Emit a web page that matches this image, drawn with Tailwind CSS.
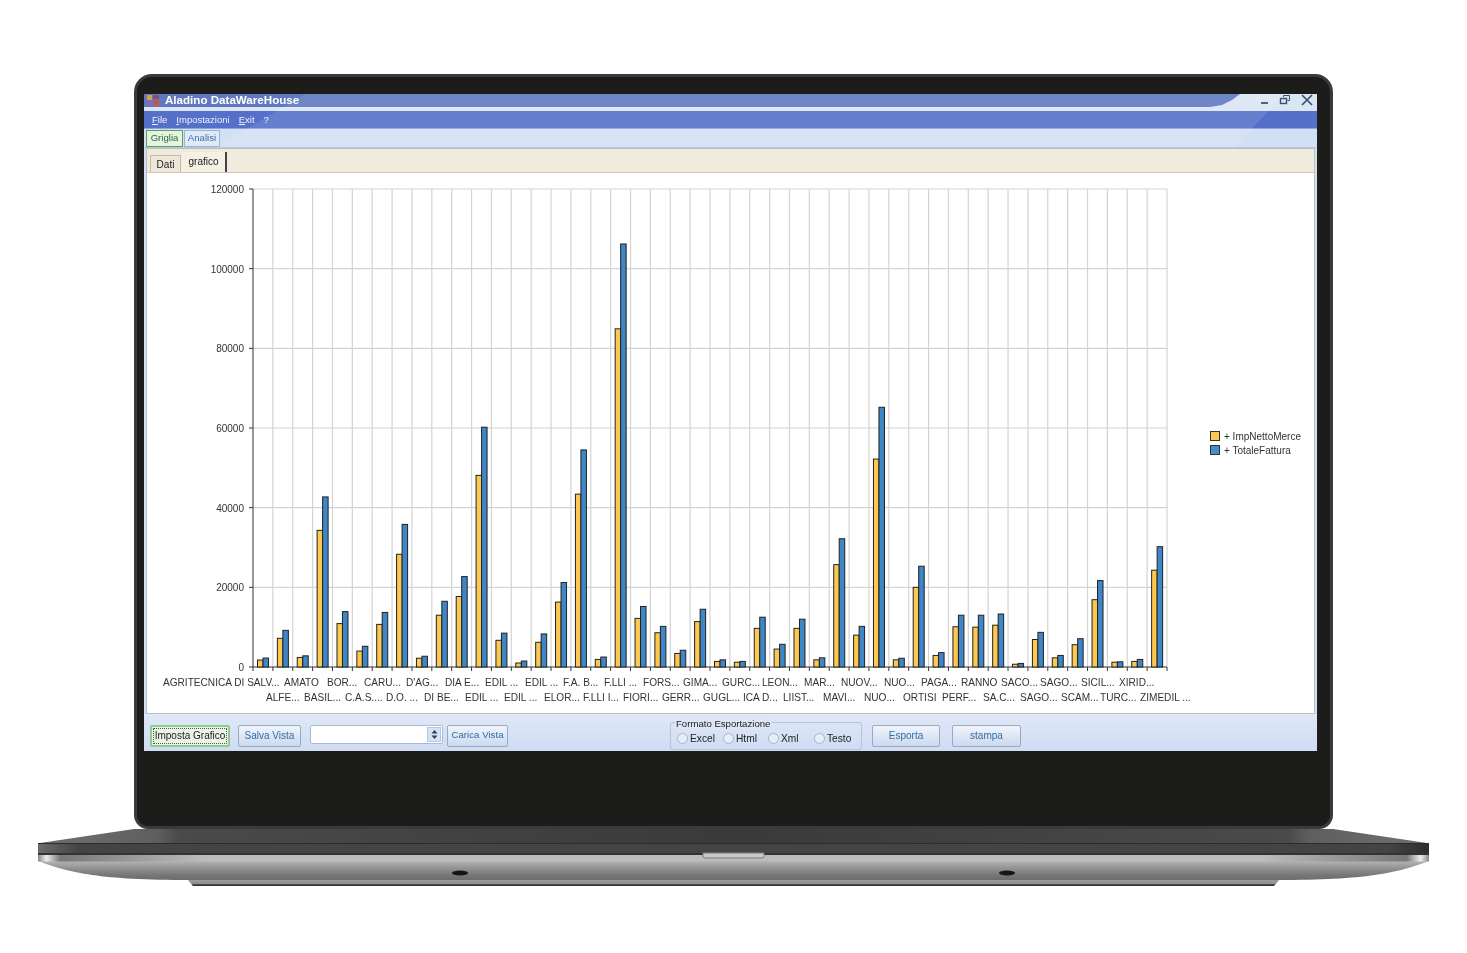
<!doctype html>
<html lang="it">
<head>
<meta charset="utf-8">
<title>Aladino DataWareHouse</title>
<script src="https://cdn.jsdelivr.net/npm/@tailwindcss/browser@4"></script>
</head>
<body class="bg-white font-['Liberation_Sans',Arial,sans-serif] overflow-hidden">
<div class="h-[953px] w-[1467px] pt-[74px]">
  <!-- lid -->
  <div class="ml-[134px] h-[755px] w-[1199px] rounded-t-[18px] rounded-b-[14px] border-[3px] border-[#3a3a3a] bg-[#1c1c1a] pl-[7px] pr-[13px] pt-[17px]">
    <div class="relative flex h-[657px] flex-col overflow-hidden bg-[#d3e0f4] blur-[0.5px]">
      <!-- title bar -->
      <div class="relative flex h-[17px] items-start bg-[#dbe5f4]">
        <div class="absolute left-0 top-0 h-[13px] w-[1096px] bg-[#5f78c0] [clip-path:polygon(0_0,1096px_0,1088px_6px,1078px_11px,1066px_13px,0_13px)]"></div>
        <svg class="relative ml-[2px] h-[13px] w-[15px]" viewBox="0 0 15 13"><rect x="1" y="1" width="5" height="5" fill="#d9a23c"/><rect x="7" y="1" width="6" height="4" fill="#8a4a7a"/><rect x="1" y="7" width="6" height="5" fill="#8c6bb0"/><rect x="8" y="6" width="5" height="6" fill="#c45a3a"/></svg>
        <span class="relative ml-[4px] text-[11.6px] font-bold leading-[11px] text-white">Aladino DataWareHouse</span>
        <div class="relative ml-auto mr-[3px] flex items-start gap-[9px]">
          <svg class="mt-px h-[12px] w-[12px]" viewBox="0 0 12 12"><rect x="3" y="7" width="7" height="2" fill="#3d5270"/></svg>
          <svg class="h-[12px] w-[12px]" viewBox="0 0 12 12" fill="none" stroke="#3d5270"><rect x="1.5" y="4.5" width="6" height="5" stroke-width="1.4"/><path d="M4.5 3V1.5h6v5H8.5"/></svg>
          <svg class="h-[13px] w-[14px]" viewBox="0 0 14 13" fill="none" stroke="#3d5270" stroke-width="1.7"><path d="M2 1l10 10M12 1L2 11"/></svg>
        </div>
      </div>
      <!-- menu -->
      <div class="flex h-[18px] items-center gap-[9px] border-b border-[#8ca3de] bg-[#5470c8] pl-[8px] pt-px text-[9.5px] text-[#eef2fb]">
        <span><u>F</u>ile</span><span><u>I</u>mpostazioni</span><span><u>E</u>xit</span><span>?</span>
      </div>
      <!-- top tabs -->
      <div class="flex h-[19px] items-end gap-px border-b border-[#b8c6d8] bg-[#d3e0f4] pl-[2px] text-[9.6px]">
        <div class="flex h-[17px] w-[37px] items-center justify-center border border-[#5aa05a] bg-[#e6f4df] text-[#2c6a3c]">Griglia</div>
        <div class="flex h-[17px] w-[36px] items-center justify-center border border-[#9db4cf] bg-[#dfe9f7] text-[#3a6ea5]">Analisi</div>
      </div>
      <!-- panel -->
      <div class="mx-[2px] flex h-[566px] flex-col border border-[#b7bfc4] bg-[#f0ebdc]">
        <div class="flex h-[24px] items-end gap-px border-b border-[#cfc8b2] pl-[3px] text-[10px] text-[#222]">
          <div class="flex h-[17px] w-[31px] items-center justify-center border border-b-0 border-[#c2bca8] bg-[#ece7d8] pt-px">Dati</div>
          <div class="flex h-[20px] w-[45px] items-center justify-center border-r-2 border-[#444] bg-[#f4f0e4] pb-[2px]">grafico</div>
        </div>
        <div class="flex-1 bg-white">
          <svg id="chart" class="block h-[540px] w-[1167px]" viewBox="147 173 1167 540"></svg>
        </div>
      </div>
      <!-- bottom bar -->
      <div class="flex flex-1 items-start bg-gradient-to-b from-[#dfe8f7] to-[#cfdcf3] pl-[6px] pt-[11px] text-[10px] text-[#2f6ea5]">
        <button class="flex h-[22px] w-[80px] items-center justify-center whitespace-nowrap rounded-[2px] border-2 border-[#8fcb8a] bg-[#eaf3e6] text-[#222]"><span class="border border-dotted border-[#555] px-px leading-[14px]">Imposta Grafico</span></button>
        <button class="ml-[8px] h-[22px] w-[63px] rounded-[2px] border border-[#9aa9bd] bg-gradient-to-b from-[#f1f5fc] to-[#ccd9ee] pb-[2px]">Salva Vista</button>
        <div class="ml-[9px] flex h-[19px] w-[133px] items-center justify-end rounded-[2px] border border-[#a9bbd4] bg-white pr-px">
          <span class="flex h-[15px] w-[14px] items-center justify-center border border-[#b7c6dc] bg-[#d8e3f3]"><svg class="h-[9px] w-[7px]" viewBox="0 0 7 9" fill="#25406b"><path d="M3.5 0L6.5 3.5H.5zM3.5 9L.5 5.5h6z"/></svg></span>
        </div>
        <button class="ml-[4px] h-[22px] w-[61px] rounded-[2px] border border-[#9aa9bd] bg-gradient-to-b from-[#f1f5fc] to-[#ccd9ee] pb-[2px] text-[9.7px]">Carica Vista</button>
        <div class="relative -mt-[3px] ml-[162px] flex h-[28px] w-[192px] items-center rounded-[3px] border border-[#b3c4dc] pl-[6px] pt-[6px] text-[10.2px] text-[#222]">
          <span class="absolute -top-[5px] left-[4px] bg-[#dce6f6] px-px text-[9.6px] leading-[12px]">Formato Esportazione</span>
          <span class="flex w-[46px] items-center gap-[2px]"><i class="h-[11px] w-[11px] rounded-full border border-[#a8b4c4] bg-[#e8eef8]"></i>Excel</span>
          <span class="flex w-[45px] items-center gap-[2px]"><i class="h-[11px] w-[11px] rounded-full border border-[#a8b4c4] bg-[#e8eef8]"></i>Html</span>
          <span class="flex w-[46px] items-center gap-[2px]"><i class="h-[11px] w-[11px] rounded-full border border-[#a8b4c4] bg-[#e8eef8]"></i>Xml</span>
          <span class="flex items-center gap-[2px]"><i class="h-[11px] w-[11px] rounded-full border border-[#a8b4c4] bg-[#e8eef8]"></i>Testo</span>
        </div>
        <button class="ml-[10px] h-[22px] w-[68px] rounded-[2px] border border-[#9aa9bd] bg-gradient-to-b from-[#f1f5fc] to-[#ccd9ee] pb-[2px]">Esporta</button>
        <button class="ml-[12px] h-[22px] w-[69px] rounded-[2px] border border-[#9aa9bd] bg-gradient-to-b from-[#f1f5fc] to-[#ccd9ee] pb-[2px]">stampa</button>
      </div>
      <!-- riflesso diagonale sulle barre -->
      <div class="absolute left-0 top-0 h-[54px] w-[1173px] bg-white/10 [clip-path:polygon(161px_0,1141px_0,1089px_54px,71px_54px)]"></div>
    </div>
  </div>
  <!-- base -->
  <svg class="-mt-px block h-[70px] w-[1467px]" viewBox="0 828 1467 70">
    <defs>
      <linearGradient id="top" x1="0" x2="1" y1="0" y2="0">
        <stop offset="0.03" stop-color="#6a6a6a"/><stop offset="0.085" stop-color="#5e5e5e"/><stop offset="0.1" stop-color="#4a4a4a"/><stop offset="0.5" stop-color="#3a3a3a"/><stop offset="0.9" stop-color="#4a4a4a"/><stop offset="0.915" stop-color="#5e5e5e"/><stop offset="0.97" stop-color="#6a6a6a"/>
      </linearGradient>
      <linearGradient id="band" x1="0" x2="1" y1="0" y2="0">
        <stop offset="0" stop-color="#6a6a6a"/><stop offset="0.03" stop-color="#444"/><stop offset="0.97" stop-color="#444"/><stop offset="1" stop-color="#2e2e2e"/>
      </linearGradient>
      <linearGradient id="rim" x1="0" x2="1" y1="0" y2="0">
        <stop offset="0" stop-color="#888"/><stop offset="0.006" stop-color="#eee"/><stop offset="0.016" stop-color="#777"/><stop offset="0.12" stop-color="#bcbcbc"/><stop offset="0.88" stop-color="#bcbcbc"/><stop offset="0.984" stop-color="#777"/><stop offset="0.994" stop-color="#eee"/><stop offset="1" stop-color="#888"/>
      </linearGradient>
      <linearGradient id="belly" x1="0" x2="0" y1="0" y2="1">
        <stop offset="0" stop-color="#b4b4b4"/><stop offset="0.3" stop-color="#999"/><stop offset="0.75" stop-color="#767676"/><stop offset="1" stop-color="#6c6c6c"/>
      </linearGradient>
      <linearGradient id="foot" x1="0" x2="0" y1="0" y2="1">
        <stop offset="0" stop-color="#a2a2a2"/><stop offset="0.75" stop-color="#8c8c8c"/><stop offset="0.8" stop-color="#333"/><stop offset="1" stop-color="#333"/>
      </linearGradient>
    </defs>
    <path d="M134 829L40 843H1427L1333 829Z" fill="url(#top)"/>
    <rect x="38" y="843" width="1391" height="1" fill="#2c2c2c"/>
    <rect x="38" y="844" width="1391" height="9" fill="url(#band)"/>
    <rect x="38" y="853" width="1391" height="2" fill="#333"/>
    <path d="M187 879L193 886H1274L1280 879Z" fill="url(#foot)"/>
    <path d="M38 861C70 873 100 880 190 880H1277C1367 880 1397 873 1429 861Z" fill="url(#belly)"/>
    <rect x="38" y="855" width="1391" height="6.5" fill="url(#rim)"/>
    <path d="M703 853H764V856Q764 858 762 858H705Q703 858 703 856Z" fill="#c8c8c8" stroke="#7c7c7c"/>
    <ellipse cx="460" cy="873" rx="8" ry="2.5" fill="#161616"/>
    <ellipse cx="1007" cy="873" rx="8" ry="2.5" fill="#161616"/>
  </svg>
</div>
<script>
var vals = [[1750,2250],[7200,9200],[2400,2800],[34300,42700],[10900,13900],[4000,5200],[10700,13700],[28300,35800],[2200,2700],[13000,16500],[17700,22700],[48100,60200],[6700,8500],[1000,1500],[6200,8300],[16300,21200],[43400,54500],[1900,2500],[84900,106200],[12200,15200],[8600,10200],[3400,4200],[11400,14500],[1400,1800],[1200,1400],[9700,12500],[4500,5700],[9700,12000],[1800,2300],[25700,32200],[8000,10200],[52200,65200],[1800,2200],[20000,25300],[2900,3600],[10100,13000],[10000,13000],[10500,13300],[700,900],[6900,8700],[2300,2900],[5600,7100],[16900,21700],[1200,1300],[1400,1900],[24300,30200]];
var row1 = [["AGRITECNICA DI SALV...",163],["AMATO",284],["BOR...",327],["CARU...",364],["D'AG...",406],["DIA E...",445],["EDIL ...",485],["EDIL ...",525],["F.A. B...",563],["F.LLI ...",604],["FORS...",643],["GIMA...",683],["GURC...",722],["LEON...",762],["MAR...",804],["NUOV...",841],["NUO...",884],["PAGA...",921],["RANNO",961],["SACO...",1001],["SAGO...",1040],["SICIL...",1081],["XIRID...",1119]];
var row2 = [["ALFE...",266],["BASIL...",304],["C.A.S....",345],["D.O. ...",386],["DI BE...",424],["EDIL ...",465],["EDIL ...",504],["ELOR...",544],["F.LLI I...",583],["FIORI...",623],["GERR...",662],["GUGL...",703],["ICA D...",743],["LIIST...",783],["MAVI...",823],["NUO...",864],["ORTISI",903],["PERF...",942],["SA.C...",983],["SAGO...",1020],["SCAM...",1061],["TURC...",1100],["ZIMEDIL ...",1140]];
var y0 = 667, k = 478 / 120000, step = 914 / 46, s = "";
var font = 'font-family="Liberation Sans" font-size="10" fill="#333"';
// griglia
for (var v = 0; v <= 120000; v += 20000) {
  var y = y0 - v * k;
  if (v) s += '<line x1="253" x2="1167" y1="'+y+'" y2="'+y+'" stroke="#d4d4d4" stroke-width="1.2"/>';
  s += '<line x1="249" x2="253" y1="'+y+'" y2="'+y+'" stroke="#333"/>';
  s += '<text x="244" y="'+(y+4)+'" text-anchor="end" '+font+'>'+v+'</text>';
}
for (var i = 0; i <= 46; i++) {
  var x = 253 + i * step;
  if (i) s += '<line x1="'+x+'" x2="'+x+'" y1="189" y2="667" stroke="#d4d4d4" stroke-width="1.2"/>';
  s += '<line x1="'+x+'" x2="'+x+'" y1="667" y2="671" stroke="#333"/>';
}
s += '<path d="M253 189V667H1167" fill="none" stroke="#333"/>';
// barre
vals.forEach(function (p, i) {
  var x = 257.5 + i * step;
  s += '<rect x="'+x+'" y="'+(y0-p[0]*k)+'" width="5.5" height="'+p[0]*k+'" fill="#fdc84f" stroke="#222"/>';
  s += '<rect x="'+(x+5.5)+'" y="'+(y0-p[1]*k)+'" width="5.5" height="'+p[1]*k+'" fill="#3f86c6" stroke="#222"/>';
});
row1.forEach(function (l) { s += '<text x="'+l[1]+'" y="686" font-family="Liberation Sans" font-size="10.1" fill="#333">'+l[0]+'</text>'; });
row2.forEach(function (l) { s += '<text x="'+l[1]+'" y="701" font-family="Liberation Sans" font-size="10.1" fill="#333">'+l[0]+'</text>'; });
// legenda
s += '<rect x="1210.5" y="431.5" width="9" height="9" fill="#fdc84f" stroke="#333"/><text x="1224" y="440" '+font+'>+ ImpNettoMerce</text>';
s += '<rect x="1210.5" y="445.5" width="9" height="9" fill="#4a8cc8" stroke="#333"/><text x="1224" y="454" '+font+'>+ TotaleFattura</text>';
document.getElementById("chart").innerHTML = s;
</script>
</body>
</html>
